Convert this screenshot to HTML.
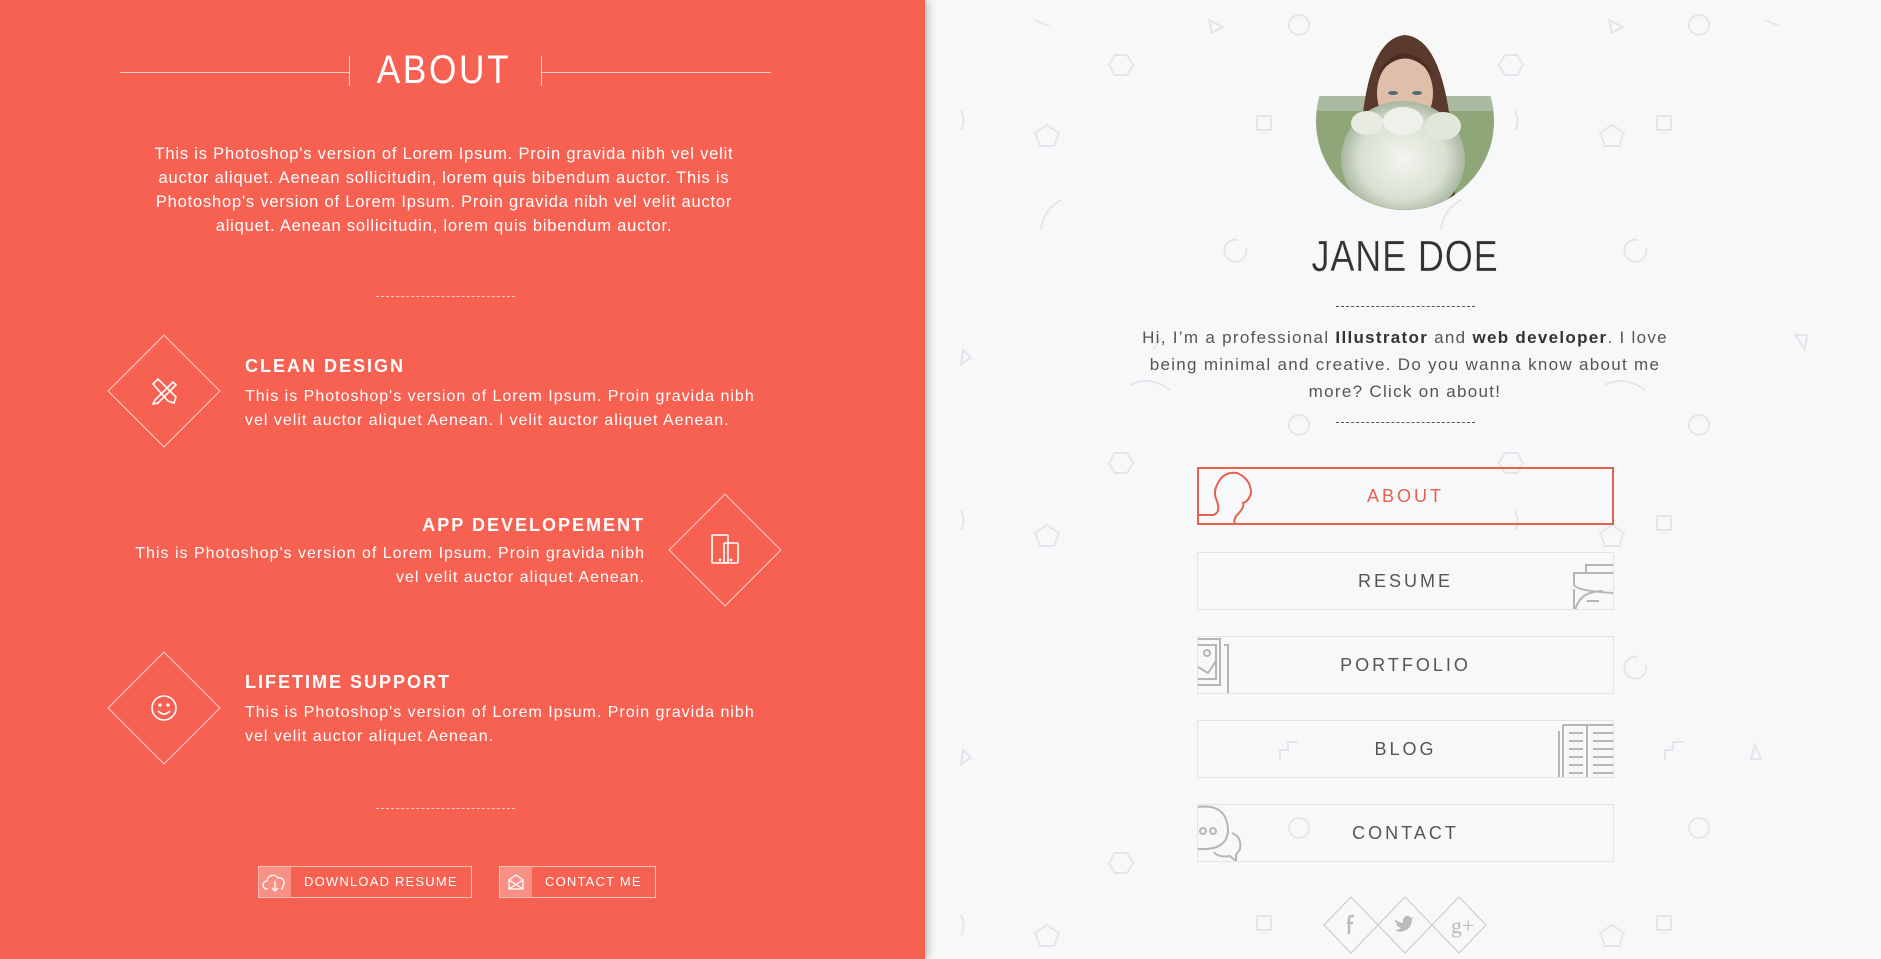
<!DOCTYPE html>
<html><head><meta charset="utf-8"><style>
*{margin:0;padding:0;box-sizing:border-box}
body{width:1881px;height:959px;overflow:hidden;font-family:"Liberation Sans",sans-serif;background:#f7f8fa;position:relative}
.left{position:absolute;left:0;top:0;width:925px;height:959px;background:#f66152;box-shadow:3px 0 8px rgba(0,0,0,.25);z-index:2;color:#fff}
.abs{position:absolute}
.ttl{left:0;width:888px;top:48px;text-align:center;font-size:40px;letter-spacing:3px;font-weight:normal;transform:scaleX(.88)}
.hl{height:1px;background:rgba(255,255,255,.7)}
.vl{width:1px;background:rgba(255,255,255,.7)}
.p{left:100px;width:688px;top:142px;text-align:center;font-size:16.5px;line-height:24px;letter-spacing:.8px;white-space:nowrap}
.dash{border-top:1px dashed rgba(255,255,255,.7);height:0}
.dia{width:80px;height:80px;border:1px solid rgba(255,255,255,.7);transform:rotate(45deg)}
.ft{font-size:18px;letter-spacing:2px;font-weight:bold;white-space:nowrap}
.fp{font-size:16px;line-height:24px;letter-spacing:1px;white-space:nowrap}
.btn{border:1px solid rgba(255,255,255,.6);height:32px;font-size:13px;letter-spacing:1.2px;line-height:30px}
.btn .ic{position:absolute;left:0;top:0;width:32px;height:30px;background:rgba(255,255,255,.3)}
.nav{position:absolute;left:1197px;width:417px;height:58px;border:1px solid #e3e4e6;text-align:center;line-height:56px;font-size:18px;letter-spacing:3px;color:#555;overflow:hidden}
.nav svg{position:absolute}
</style></head><body>
<svg class="abs" style="left:925px;top:0" width="956" height="959" fill="none" stroke="#e4e6e9" stroke-width="2">
<circle cx="374" cy="25" r="10"/><circle cx="774" cy="25" r="10"/>
<path d="M284 20l14 7-11 6z"/><path d="M684 20l14 7-11 6z"/>
<path d="M190 55l-6 10 6 10h12l6-10-6-10z"/><path d="M580 55l-6 10 6 10h12l6-10-6-10z"/>
<rect x="332" y="116" width="14" height="14"/><rect x="732" y="116" width="14" height="14"/>
<path d="M122 125l12 8-5 13h-14l-5-13z"/><path d="M687 125l12 8-5 13h-14l-5-13z"/>
<path d="M136 200q-18 10-20 30"/><path d="M536 200q-18 10-20 30"/>
<path d="M321 248a11 11 0 1 1 -8 -8"/><path d="M721 248a11 11 0 1 1 -8 -8"/>
<path d="M36 110q5 12 0 20"/><path d="M590 110q5 12 0 20"/>
<path d="M228 350l8-12"/><path d="M880 350l-10-15 12 0z"/>
<path d="M38 350l8 8-10 6z"/><path d="M205 385q20-10 40 5"/><path d="M680 385q20-10 40 5"/>
<circle cx="374" cy="425" r="10"/><circle cx="774" cy="425" r="10"/>
<path d="M190 453l-6 10 6 10h12l6-10-6-10z"/><path d="M580 453l-6 10 6 10h12l6-10-6-10z"/>
<path d="M122 525l12 8-5 13h-14l-5-13z"/><path d="M687 525l12 8-5 13h-14l-5-13z"/>
<rect x="732" y="516" width="14" height="14"/>
<path d="M721 665a11 11 0 1 1 -8 -8"/><path d="M36 510q5 12 0 20"/><path d="M590 510q5 12 0 20"/>
<path d="M355 760v-10h8v-8h10"/><path d="M740 760v-10h8v-8h10"/><path d="M38 750l8 8-10 6z"/><path d="M830 745l6 14h-10z"/>
<circle cx="374" cy="828" r="10"/><circle cx="774" cy="828" r="10"/>
<path d="M190 853l-6 10 6 10h12l6-10-6-10z"/>
<rect x="332" y="916" width="14" height="14"/><rect x="732" y="916" width="14" height="14"/>
<path d="M122 925l12 8-5 13h-14l-5-13z"/><path d="M687 925l12 8-5 13h-14l-5-13z"/>
<path d="M36 915q5 12 0 20"/><path d="M840 20l14 6"/><path d="M110 20l14 6"/>
</svg>
<div class="left">
 <div class="abs ttl">ABOUT</div>
 <div class="abs hl" style="left:120px;top:72px;width:229px"></div>
 <div class="abs vl" style="left:349px;top:56px;height:30px"></div>
 <div class="abs vl" style="left:541px;top:56px;height:30px"></div>
 <div class="abs hl" style="left:541px;top:72px;width:230px"></div>
 <div class="abs p">This is Photoshop's version of Lorem Ipsum. Proin gravida nibh vel velit<br>auctor aliquet. Aenean sollicitudin, lorem quis bibendum auctor. This is<br>Photoshop's version of Lorem Ipsum. Proin gravida nibh vel velit auctor<br>aliquet. Aenean sollicitudin, lorem quis bibendum auctor.</div>
 <div class="abs dash" style="left:376px;top:296px;width:139px"></div>

 <div class="abs dia" style="left:124px;top:351px"></div>
 <svg class="abs" style="left:149px;top:376px" width="30" height="30" fill="none" stroke="#fff" stroke-width="1.6"><path d="M4 8l5-5 18 18-2 6-6-2z M6 24l18-18 3 3-18 18-5 1z"/></svg>
 <div class="abs ft" style="left:245px;top:356px">CLEAN DESIGN</div>
 <div class="abs fp" style="left:245px;top:385px">This is Photoshop's version of Lorem Ipsum. Proin gravida nibh<br>vel velit auctor aliquet Aenean. l velit auctor aliquet Aenean.</div>

 <div class="abs dia" style="left:685px;top:510px"></div>
 <svg class="abs" style="left:710px;top:533px" width="32" height="34" fill="none" stroke="#fff" stroke-width="1.6"><rect x="2" y="2" width="16" height="28" rx="1"/><rect x="14" y="10" width="14" height="20" rx="1"/><circle cx="10" cy="27" r=".6"/><circle cx="21" cy="27" r=".6"/></svg>
 <div class="abs ft" style="left:80px;width:565px;text-align:right;top:515px">APP DEVELOPEMENT</div>
 <div class="abs fp" style="left:80px;width:565px;text-align:right;top:542px">This is Photoshop's version of Lorem Ipsum. Proin gravida nibh<br>vel velit auctor aliquet Aenean.</div>

 <div class="abs dia" style="left:124px;top:668px"></div>
 <svg class="abs" style="left:149px;top:692px" width="30" height="32" fill="none" stroke="#fff" stroke-width="1.6"><circle cx="15" cy="16" r="12"/><circle cx="11" cy="13" r=".8"/><circle cx="19" cy="13" r=".8"/><path d="M9 19q6 6 12 0"/></svg>
 <div class="abs ft" style="left:245px;top:672px">LIFETIME SUPPORT</div>
 <div class="abs fp" style="left:245px;top:701px">This is Photoshop's version of Lorem Ipsum. Proin gravida nibh<br>vel velit auctor aliquet Aenean.</div>

 <div class="abs dash" style="left:376px;top:808px;width:139px"></div>

 <div class="abs btn" style="left:258px;top:866px;width:214px"><div class="ic"><svg width="32" height="30" fill="none" stroke="#fff" stroke-width="1.3"><path d="M9 22h-1a4 4 0 0 1 0-8 6 6 0 0 1 11-3 5 5 0 0 1 5 8l-1 3h-1"/><path d="M16 14v10m-3-3l3 3 3-3"/></svg></div><span style="position:absolute;left:45px">DOWNLOAD RESUME</span></div>
 <div class="abs btn" style="left:499px;top:866px;width:157px"><div class="ic"><svg width="32" height="30" fill="none" stroke="#fff" stroke-width="1.3"><path d="M9 13l7-5 7 5v9h-14z M9 13l14 9 M23 13l-14 9"/></svg></div><span style="position:absolute;left:45px">CONTACT ME</span></div>
</div>

<svg class="abs" style="left:1315px;top:31px" width="180" height="180">
<defs><clipPath id="c"><ellipse cx="90" cy="90" rx="89" ry="89"/></clipPath>
<radialGradient id="fl" cx="50%" cy="50%" r="50%"><stop offset="0" stop-color="#f3f5ef"/><stop offset=".7" stop-color="#d9e0d2"/><stop offset="1" stop-color="#a9b7a0"/></radialGradient></defs>
<g clip-path="url(#c)">
<rect width="180" height="180" fill="#f8f9f7"/>
<rect y="65" width="180" height="115" fill="#8fa679"/>
<rect y="65" width="180" height="15" fill="#a9baa0"/>
<path d="M45 180 Q40 8 90 4 Q140 8 140 180z" fill="#5a3a2c"/>
<ellipse cx="90" cy="62" rx="28" ry="36" fill="#dfbfaa"/>
<path d="M62 45 Q90 10 118 45 Q110 25 90 22 Q70 25 62 45z" fill="#4a2e22"/>
<ellipse cx="78" cy="62" rx="5" ry="2" fill="#506b74"/><ellipse cx="102" cy="62" rx="5" ry="2" fill="#506b74"/>
<ellipse cx="88" cy="128" rx="62" ry="58" fill="url(#fl)"/>
<ellipse cx="52" cy="92" rx="16" ry="12" fill="#e7ebe2"/><ellipse cx="128" cy="95" rx="18" ry="14" fill="#e2e7dc"/>
<ellipse cx="88" cy="90" rx="20" ry="14" fill="#eef1ea"/>
</g></svg>

<div class="abs" style="left:1205px;width:400px;top:232px;text-align:center;font-size:44px;color:#333;letter-spacing:1px;transform:scaleX(.82);-webkit-text-stroke:.3px #f7f8fa">JANE DOE</div>
<div class="abs" style="left:1336px;top:306px;width:139px;border-top:1px dashed #555"></div>
<div class="abs" style="left:1105px;width:600px;top:324px;text-align:center;font-size:17px;line-height:27px;color:#555;letter-spacing:1.3px;white-space:nowrap">Hi, I’m a professional <b style="color:#333">Illustrator</b> and <b style="color:#333">web developer</b>. I love<br>being minimal and creative. Do you wanna know about me<br>more? Click on about!</div>
<div class="abs" style="left:1336px;top:422px;width:139px;border-top:1px dashed #555"></div>

<div class="nav" style="top:467px;border:2px solid #e5604f;color:#e5604f;line-height:54px">ABOUT
<svg style="left:0;top:0" width="60" height="56" fill="none" stroke="#e5604f" stroke-width="2"><path d="M0 46h14q8-2 4-14-4-8 0-16 6-14 20-12 14 6 14 20-2 8-8 10 2 4-6 12-8 10 8 14"/></svg></div>
<div class="nav" style="top:552px">RESUME
<svg style="right:0;top:0" width="50" height="58" fill="none" stroke="#b5b5b5" stroke-width="2"><path d="M23 20v-8h27 M50 20h-39v12q4 6 39 8 M24 48h12 M11 36v22 M12 58q4-20 28-20"/></svg></div>
<div class="nav" style="top:636px">PORTFOLIO
<svg style="left:0;top:0" width="40" height="58" fill="none" stroke="#b5b5b5" stroke-width="2"><path d="M0 2h22v46h-22 M0 8h18v34h-18 M0 30l10 6 8-12 M26 8h4v50"/><circle cx="9" cy="16" r="3"/></svg></div>
<div class="nav" style="top:720px">BLOG
<svg style="right:0;top:0" width="56" height="58" fill="none" stroke="#b5b5b5" stroke-width="2"><path d="M2 10v48 M6 4v54 M30 4v54 M6 4h50 M12 12h14M12 20h14M12 28h14M12 36h14M12 44h14M12 52h14 M36 12h20M36 20h20M36 28h20M36 36h20M36 44h20M36 52h20"/></svg></div>
<div class="nav" style="top:804px">CONTACT
<svg style="left:0;top:0" width="60" height="58" fill="none" stroke="#b5b5b5" stroke-width="2"><path d="M0 2q28-4 30 22 0 22-30 20 M34 28q10 4 8 16l-4 6v6l-6-5q-12 2-16-4"/><circle cx="5" cy="26" r="3"/><circle cx="15" cy="26" r="3"/></svg></div>

<svg class="abs" style="left:1320px;top:895px" width="170" height="60" fill="none" stroke="#ccc" stroke-width="1.2">
<path d="M31 2l27 28-27 28-27-28z"/><path d="M85 2l27 28-27 28-27-28z"/><path d="M139 2l27 28-27 28-27-28z"/>
<path d="M34 21h-2q-3 0-3 3v15 M27 28h6" stroke="#bbb" stroke-width="2.5"/>
<path d="M76 25q4 3 7 3-1-5 3-7 3-1 5 2l3-1-2 2q0 9-8 12-5 2-9-1 4 0 6-2-4-1-5-4h2q-3-1-3-4z" fill="#bbb" stroke="none"/>
<text x="131" y="38" font-family="Liberation Serif,serif" font-size="22" fill="#bbb" stroke="none">g+</text>
</svg>
</body></html>
